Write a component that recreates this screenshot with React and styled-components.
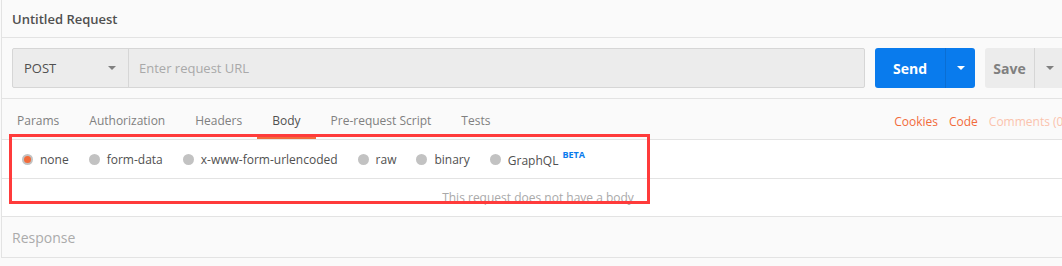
import styled, { createGlobalStyle } from "styled-components";

const GlobalStyle = createGlobalStyle`
  body {
    margin: 0;
    background: #fafafa;
    overflow: hidden;
    font-family: "Open Sans", "Liberation Sans", sans-serif;
  }
`;

const Page = styled.div`
  display: flex;
  width: 1074px;
`;

const SidebarEdge = styled.div`
  width: 1px;
  border-right: 1px solid #e3e3e3;
  background: #fafafa;
`;

const Panel = styled.div`
  position: relative;
  flex: 1;
  display: flex;
  flex-direction: column;
`;

const Header = styled.div`
  height: 37px;
  display: flex;
  align-items: center;
  padding: 0 10px;
  border-bottom: 1px solid #e3e3e3;
  font-size: 13px;
  font-weight: 600;
  color: #505050;
`;

const UrlSection = styled.div`
  display: flex;
  gap: 10px;
  padding: 10px;
  border-bottom: 1px solid #e3e3e3;
`;

const UrlBar = styled.div`
  flex: 1;
  display: flex;
  height: 38px;
  background: #ececec;
  border: 1px solid #d6d6d6;
  border-radius: 2px;
`;

const MethodSelect = styled.div`
  display: flex;
  align-items: center;
  justify-content: space-between;
  padding: 0 12px 0 11px;
  box-sizing: border-box;
  width: 116px;
  border-right: 1px solid #d6d6d6;
  font-size: 13px;
  color: #505050;
`;

const Caret = styled.span`
  width: 0;
  height: 0;
  border-left: 4px solid transparent;
  border-right: 4px solid transparent;
  border-top: 4px solid ${(p) => p.$color || "#808080"};
`;

const UrlInput = styled.div`
  flex: 1;
  display: flex;
  align-items: center;
  padding-left: 10px;
  font-size: 13px;
  color: #a9a9a9;
`;

const SplitButton = styled.div`
  display: flex;
  height: 40px;
  border-radius: 3px;
  background: ${(p) => (p.$primary ? "#097bed" : "#ececec")};
  color: ${(p) => (p.$primary ? "#fff" : "#808080")};
  font-size: 14px;
  font-weight: 700;
`;

const ButtonMain = styled.div`
  width: ${(p) => p.$width}px;
  display: flex;
  align-items: center;
  justify-content: center;
`;

const ButtonCaret = styled.div`
  width: ${(p) => p.$width}px;
  display: flex;
  align-items: center;
  justify-content: center;
  border-left: 1px solid ${(p) => (p.$primary ? "#0a6ed3" : "#d6d6d6")};
`;

const TabsRow = styled.div`
  display: flex;
  justify-content: space-between;
  height: 40px;
  border-bottom: 1px solid #e3e3e3;
`;

const Tabs = styled.div`
  display: flex;
`;

const Tab = styled.div`
  padding: 14px 15px 0;
  box-sizing: border-box;
  height: 40px;
  font-size: 12px;
  line-height: 16px;
  color: ${(p) => (p.$active ? "#505050" : "#808080")};
  border-bottom: 3px solid ${(p) => (p.$active ? "#f26b3a" : "transparent")};
`;

const Links = styled.div`
  display: flex;
  gap: 11px;
  padding: 15px 7px 0 0;
  font-size: 12px;
  line-height: 16px;
  white-space: nowrap;
`;

const Link = styled.span`
  color: ${(p) => (p.$faded ? "#fbc3ad" : "#f26b3a")};
`;

const RadioRow = styled.div`
  display: flex;
  align-items: center;
  gap: 20px;
  height: 38px;
  padding-left: 20px;
  background: #fff;
  border-bottom: 1px solid #e3e3e3;
`;

const RadioOption = styled.label`
  display: flex;
  align-items: center;
  gap: 7px;
  font-size: 12px;
  color: #505050;
`;

const RadioDot = styled.span`
  width: 11px;
  height: 11px;
  border-radius: 50%;
  background: #c2c2c2;
  display: flex;
  align-items: center;
  justify-content: center;
  &::after {
    content: "";
    width: 7px;
    height: 7px;
    border-radius: 50%;
    background: ${(p) => (p.$checked ? "#f26b3a" : "transparent")};
  }
`;

const Beta = styled.sup`
  margin-left: 4px;
  font-size: 9px;
  font-weight: 700;
  color: #097bed;
  position: relative;
  top: -2px;
`;

const BodyEmpty = styled.div`
  height: 37px;
  display: flex;
  align-items: center;
  justify-content: center;
  background: #fff;
  border-bottom: 1px solid #e3e3e3;
  font-size: 12px;
  color: #a9a9a9;
`;

const Response = styled.div`
  height: 40px;
  display: flex;
  align-items: center;
  padding-left: 10px;
  border-bottom: 1px solid #e3e3e3;
  font-size: 14px;
  color: #ababab;
`;

const Highlight = styled.div`
  position: absolute;
  left: 7px;
  top: 134px;
  width: 641px;
  height: 70px;
  box-sizing: border-box;
  border: 3px solid #ff3b3b;
  pointer-events: none;
`;

const tabs = ["Params", "Authorization", "Headers", "Body", "Pre-request Script", "Tests"];
const bodyTypes = ["none", "form-data", "x-www-form-urlencoded", "raw", "binary", "GraphQL"];

const App = () => {
  return (
    <>
      <GlobalStyle />
      <Page>
        <SidebarEdge />
        <Panel>
          <Header>Untitled Request</Header>
          <UrlSection>
            <UrlBar>
              <MethodSelect>
                POST
                <Caret />
              </MethodSelect>
              <UrlInput>Enter request URL</UrlInput>
            </UrlBar>
            <SplitButton $primary>
              <ButtonMain $width={70}>Send</ButtonMain>
              <ButtonCaret $width={29} $primary>
                <Caret $color="#fff" />
              </ButtonCaret>
            </SplitButton>
            <SplitButton>
              <ButtonMain $width={49}>Save</ButtonMain>
              <ButtonCaret $width={29}>
                <Caret />
              </ButtonCaret>
            </SplitButton>
          </UrlSection>
          <TabsRow>
            <Tabs>
              {tabs.map((t) => (
                <Tab key={t} $active={t === "Body"}>
                  {t}
                </Tab>
              ))}
            </Tabs>
            <Links>
              <Link>Cookies</Link>
              <Link>Code</Link>
              <Link $faded>Comments (0)</Link>
            </Links>
          </TabsRow>
          <RadioRow>
            {bodyTypes.map((b) => (
              <RadioOption key={b}>
                <RadioDot $checked={b === "none"} />
                <span>
                  {b}
                  {b === "GraphQL" && <Beta>BETA</Beta>}
                </span>
              </RadioOption>
            ))}
          </RadioRow>
          <BodyEmpty>This request does not have a body</BodyEmpty>
          <Response>Response</Response>
          <Highlight />
        </Panel>
      </Page>
    </>
  );
};

export default App;
